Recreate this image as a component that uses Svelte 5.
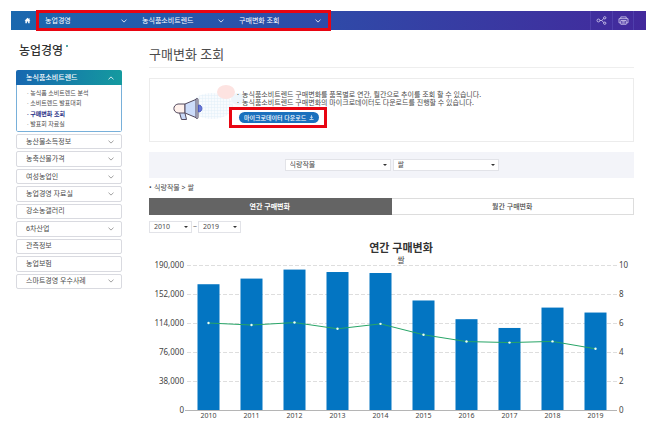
<script>
  const crumbs = ['농업경영', '농식품소비트렌드', '구매변화 조회'];

  const subMenu = ['농식품 소비트렌드 분석', '소비트렌드 발표대회', '구매변화 조회', '발표회 자료실'];

  const menu = [
    { name: '농산물소득정보', more: true },
    { name: '농축산물가격', more: true },
    { name: '여성농업인', more: true },
    { name: '농업경영 자료실', more: true },
    { name: '강소농갤러리', more: false },
    { name: '6차산업', more: true },
    { name: '관측정보', more: false },
    { name: '농업보험', more: false },
    { name: '스마트경영 우수사례', more: true }
  ];

  const rows = [
    { year: 2010, amount: 164800, rate: 6.0 },
    { year: 2011, amount: 172200, rate: 5.86 },
    { year: 2012, amount: 184000, rate: 6.03 },
    { year: 2013, amount: 180800, rate: 5.6 },
    { year: 2014, amount: 179500, rate: 5.94 },
    { year: 2015, amount: 143500, rate: 5.19 },
    { year: 2016, amount: 119000, rate: 4.72 },
    { year: 2017, amount: 107500, rate: 4.65 },
    { year: 2018, amount: 134200, rate: 4.73 },
    { year: 2019, amount: 127700, rate: 4.22 }
  ];

  // chart geometry
  const left = 38;
  const right = 468;
  const top = 25;
  const bottom = 170;
  const step = (right - left) / rows.length;
  const barWidth = 22;
  const ticks = [0, 1, 2, 3, 4, 5];

  const cx = (i) => left + step * (i + 0.5);
  const amountY = (v) => bottom - (v / 190000) * (bottom - top);
  const rateY = (v) => bottom - (v / 10) * (bottom - top);

  let active = $state('구매변화 조회');
  let tab = $state('year');
  let group = $state('식량작물');
  let item = $state('쌀');
  let from = $state(2010);
  let to = $state(2019);

  let linePoints = $derived(rows.map((r, i) => `${cx(i)},${rateY(r.rate)}`).join(' '));
</script>

{#snippet chevron(up)}
  <svg class="chevron" class:up viewBox="0 0 6 4" aria-hidden="true">
    <path d="M0.5 0.7 L3 3.1 L5.5 0.7" />
  </svg>
{/snippet}

<header class="topbar">
  <a class="home" href="#home" aria-label="홈">
    <svg viewBox="0 0 10 10"><path d="M5 1 L0.8 5.2 H2 V9 H4.1 V6.3 H5.9 V9 H8 V5.2 H9.2 L7.9 3.9 V1.7 H6.8 V2.8 Z" /></svg>
  </a>
  <nav class="crumbs marked">
    {#each crumbs as crumb}
      <button class="crumb">{crumb}{@render chevron(false)}</button>
    {/each}
  </nav>
  <div class="tools">
    <button aria-label="공유">
      <svg viewBox="0 0 12 10">
        <circle cx="2.6" cy="5" r="1.6" /><circle cx="9.6" cy="2" r="1.3" /><circle cx="9.6" cy="8" r="1.3" />
        <path d="M4.2 5 H6.4 L8.4 2.6 M6.4 5 L8.4 7.4" />
      </svg>
    </button>
    <button aria-label="인쇄">
      <svg viewBox="0 0 12 10">
        <path d="M3 3 V1 H9 V3 M3 7.6 H1 V3 H11 V7.6 H9 M3 5 H9 V9.2 H3 Z M4.5 6.4 H7.5 M4.5 7.8 H7.5" />
      </svg>
    </button>
  </div>
</header>

<div class="page">
  <aside>
    <h2>농업경영<i></i></h2>
    <div class="current">
      <button class="head">농식품소비트렌드{@render chevron(true)}</button>
      <ul class="sub">
        {#each subMenu as name}
          <li><a href="#sub" class:active={name === active} onclick={() => (active = name)}>· {name}</a></li>
        {/each}
      </ul>
    </div>
    <ul class="menu">
      {#each menu as m}
        <li>
          <a href="#menu">{m.name}{#if m.more}{@render chevron(false)}{/if}</a>
        </li>
      {/each}
    </ul>
  </aside>

  <main>
    <h1>구매변화 조회</h1>

    <section class="info">
      <svg class="art" viewBox="0 0 76 44" aria-hidden="true">
        <defs>
          <pattern id="dots" width="3" height="3" patternUnits="userSpaceOnUse">
            <rect width="3" height="3" fill="#f8fbfe" />
            <path d="M0 0 H3 M0 0 V3" stroke="#e2eff9" stroke-width="1" />
          </pattern>
        </defs>
        <ellipse cx="40" cy="23" rx="21" ry="13" fill="url(#dots)" />
        <ellipse cx="66" cy="16" rx="7" ry="6" fill="#eef6fc" />
        <ellipse cx="54" cy="9" rx="9" ry="7" fill="#fde3e1" />
        <g stroke="#544a5e" stroke-width="1" stroke-linejoin="round">
          <path d="M7 28 L9.5 36.5 H14.5 L12.5 28 Z" fill="#c9d8f7" />
          <path d="M6 21 H13 V30 H6 C0.5 29 0.5 22 6 21 Z" fill="#fff1ec" />
          <path d="M13 21 L25 16 V35 L13 30 Z" fill="#ccdcfa" />
          <rect x="24" y="15.5" width="2" height="20" rx="1" fill="#dfe8fb" />
          <path d="M26.5 22 C31 22 31 29 26.5 29 Z" fill="#6878da" stroke="#4d5cc0" />
        </g>
      </svg>
      <div class="guide">
        <ul>
          <li>농식품소비트렌드 구매변화를 품목별로 연간, 월간으로 추이를 조회 할 수 있습니다.</li>
          <li>농식품소비트렌드 구매변화의 마이크로데이터도 다운로드를 진행할 수 있습니다.</li>
        </ul>
        <div class="download marked">
          <button>
            마이크로데이터 다운로드
            <svg viewBox="0 0 6 6" aria-hidden="true"><path d="M3 0.3 V3.8 M1.3 2.3 L3 3.9 L4.7 2.3 M0.5 5.4 H5.5" /></svg>
          </button>
        </div>
      </div>
    </section>

    <div class="filter">
      <label class="select wide">
        <select aria-label="품목군" bind:value={group}>
          <option>식량작물</option>
        </select>
      </label>
      <label class="select wide">
        <select aria-label="품목" bind:value={item}>
          <option>쌀</option>
        </select>
      </label>
    </div>

    <p class="path">{group} &gt; {item}</p>

    <div class="tabs">
      <button class:on={tab === 'year'} onclick={() => (tab = 'year')}>연간 구매변화</button>
      <button class:on={tab === 'month'} onclick={() => (tab = 'month')}>월간 구매변화</button>
    </div>

    <div class="period">
      <label class="select">
        <select aria-label="시작 연도" bind:value={from}>
          {#each rows as r}<option value={r.year}>{r.year}</option>{/each}
        </select>
      </label>
      <span>~</span>
      <label class="select">
        <select aria-label="종료 연도" bind:value={to}>
          {#each rows as r}<option value={r.year}>{r.year}</option>{/each}
        </select>
      </label>
    </div>

    <svg class="chart" viewBox="0 0 485 182" role="img" aria-label="연간 구매변화">
      <text class="title" x={(left + right) / 2 - 1} y="12">연간 구매변화</text>
      <text class="subtitle" x={(left + right) / 2 - 1} y="23">{item}</text>

      {#each ticks as t}
        {@const y = bottom - (t * (bottom - top)) / 5}
        {#if t > 0}
          <line class="grid" x1={left} x2={right} y1={y} y2={y} />
        {/if}
        <text class="amount" x={left - 3} y={y + 3}>{(t * 38000).toLocaleString('en-US')}</text>
        <text class="rate" x={right + 2} y={y + 3}>{t * 2}</text>
      {/each}

      {#each rows as r, i}
        <rect class="bar" x={cx(i) - barWidth / 2} y={amountY(r.amount)} width={barWidth} height={bottom - amountY(r.amount)} />
        <text class="year" x={cx(i)} y={bottom + 8}>{r.year}</text>
      {/each}
      <line class="axis" x1={left - 2} x2={right} y1={bottom} y2={bottom} />

      <polyline class="line" points={linePoints} />
      {#each rows as r, i}
        <circle class="dot" cx={cx(i)} cy={rateY(r.rate)} r="1.2" />
      {/each}
    </svg>
  </main>
</div>

<style>
  :global(body) {
    background: #fff;
    color: #4c4c4c;
    font-family: "Noto Sans", "Noto Sans CJK KR", sans-serif;
    font-size: 7px;
    line-height: 10px;
  }

  ul, h1, h2, p {
    margin: 0;
    padding: 0;
    list-style: none;
  }

  a {
    color: inherit;
    text-decoration: none;
  }

  button, select {
    margin: 0;
    padding: 0;
    border: 0;
    background: none;
    color: inherit;
    font: inherit;
    cursor: pointer;
  }

  .chevron {
    width: 6px;
    height: 4px;
    fill: none;
    stroke: currentColor;
    stroke-width: 0.8;
  }

  .chevron.up {
    transform: rotate(180deg);
  }

  /* red highlight frame */
  .marked {
    position: relative;
  }

  .marked::after {
    content: "";
    position: absolute;
    inset: 0;
    border: 3px solid #e80512;
    pointer-events: none;
  }

  .topbar {
    display: flex;
    height: 19px;
    margin: 11px 7px 0 11px;
    background: linear-gradient(90deg, #1a68ae, #2f4aa8 50%, #43299c);
    color: #fff;
  }

  .home {
    display: flex;
    width: 25px;
    align-items: center;
    justify-content: center;
    padding-left: 7px;
    box-sizing: border-box;
  }

  .home svg {
    width: 7px;
    height: 7px;
    fill: #fff;
  }

  .crumbs {
    display: flex;
    padding-right: 4px;
  }

  .crumbs::after {
    inset: -1px 0;
  }

  .crumb {
    display: flex;
    width: 97px;
    align-items: center;
    justify-content: space-between;
    padding: 0 6px 0 9px;
    box-sizing: border-box;
  }

  .tools {
    display: flex;
    margin-left: auto;
    padding-right: 12px;
  }

  .tools button {
    display: flex;
    width: 22px;
    align-items: center;
    justify-content: center;
    border-left: 1px solid #4f3fac;
  }

  .tools button:last-child {
    border-right: 1px solid #4f3fac;
  }

  .tools svg {
    width: 11px;
    height: 9px;
    fill: none;
    stroke: #d5cdf0;
    stroke-width: 0.9;
  }

  .page {
    display: flex;
    gap: 27px;
    padding: 0 19px 0 16px;
  }

  aside {
    flex: 0 0 106px;
  }

  h2 {
    display: flex;
    padding: 13px 0 11px 3px;
    color: #333;
    font-size: 12px;
    font-weight: 500;
    line-height: 16px;
  }

  h2 i {
    width: 2px;
    height: 2px;
    margin: 2px 0 0 3px;
    border-radius: 50%;
    background: #1c8a8c;
  }

  .current {
    border-radius: 2px;
    overflow: hidden;
  }

  .head {
    display: flex;
    width: 100%;
    height: 15px;
    align-items: center;
    justify-content: space-between;
    padding: 0 8px 0 10px;
    background: linear-gradient(90deg, #1767b0, #149a9f);
    color: #fff;
    font-weight: 500;
  }

  .sub {
    display: grid;
    min-height: 41px;
    padding: 3px 0 2px 10px;
    border: 1px solid #78b0da;
    border-top: 0;
    border-radius: 0 0 2px 2px;
    font-size: 6px;
  }

  .sub a.active {
    color: #2a2f86;
    font-weight: 700;
  }

  .menu {
    display: grid;
    grid-auto-rows: 1fr;
    gap: 2px;
    min-height: 155px;
    margin-top: 2px;
  }

  .menu a {
    display: flex;
    height: 100%;
    align-items: center;
    justify-content: space-between;
    padding: 0 7px 0 9px;
    border: 1px solid #d9dae0;
    border-radius: 2px;
    box-sizing: border-box;
  }

  .menu .chevron {
    stroke: #888;
  }

  main {
    flex: 1;
    min-width: 0;
  }

  h1 {
    padding: 15px 0 4px;
    border-bottom: 1px solid #eee;
    font-size: 13px;
    font-weight: 400;
    line-height: 18px;
  }

  .info {
    display: flex;
    margin-top: 10px;
    padding: 4px 0 13px 22px;
    border: 1px solid #ececec;
  }

  .art {
    flex: none;
    width: 76px;
    height: 44px;
    margin-right: -11px;
  }

  .guide {
    position: relative;
    padding-top: 8px;
    line-height: 8px;
  }

  .guide li::before {
    content: "·";
    display: inline-block;
    width: 5px;
  }

  .download {
    width: max-content;
    margin-left: -8px;
    padding: 5px 8px 5px 10px;
  }

  .download button {
    display: flex;
    height: 11px;
    align-items: center;
    gap: 3px;
    padding: 0 5px;
    border-radius: 6px;
    background: #1a70bd;
    color: #fff;
    font-size: 6px;
    font-weight: 500;
  }

  .download svg {
    width: 5px;
    height: 5px;
    fill: none;
    stroke: #fff;
    stroke-width: 0.8;
  }

  .filter {
    display: flex;
    justify-content: center;
    gap: 2px;
    margin-top: 10px;
    padding: 7px 0;
    background: #f3f4f9;
  }

  .select {
    position: relative;
    display: block;
    width: 43px;
  }

  .select.wide {
    width: 106px;
  }

  .select select {
    display: block;
    width: 100%;
    height: 12px;
    padding: 0 4px;
    border: 1px solid #e2e3e8;
    background: #fff;
    appearance: none;
    line-height: 10px;
  }

  .select::after {
    content: "";
    position: absolute;
    top: 5px;
    right: 4px;
    border: 2px solid transparent;
    border-top-color: #333;
    border-bottom: 0;
    pointer-events: none;
  }

  .path {
    padding: 5px 0;
  }

  .path::before {
    content: "•";
    display: inline-block;
    width: 5px;
  }

  .tabs {
    display: flex;
  }

  .tabs button {
    flex: 1;
    height: 17px;
    border: 1px solid #ddd;
    border-left: 0;
    font-weight: 500;
  }

  .tabs button.on {
    border-color: #646464;
    background: #646464;
    color: #fff;
    font-weight: 700;
  }

  .period {
    display: flex;
    align-items: center;
    gap: 1px;
    margin-top: 6px;
  }

  .chart {
    display: block;
    width: 100%;
    margin-top: 7px;
  }

  .chart text {
    fill: #444;
    text-anchor: middle;
  }

  .chart .title {
    fill: #333;
    font-size: 11px;
    font-weight: 700;
  }

  .chart .subtitle {
    font-size: 8px;
  }

  .chart .amount {
    font-size: 8px;
    text-anchor: end;
  }

  .chart .rate {
    font-size: 8px;
    text-anchor: start;
  }

  .chart .year {
    font-size: 7px;
  }

  .grid {
    stroke: #dedede;
    stroke-dasharray: 4 2;
    shape-rendering: crispEdges;
  }

  .axis {
    stroke: #b5b5b5;
    shape-rendering: crispEdges;
  }

  .bar {
    fill: #0375c2;
  }

  .line {
    fill: none;
    stroke: #27a567;
  }

  .dot {
    fill: #eafff2;
  }
</style>
